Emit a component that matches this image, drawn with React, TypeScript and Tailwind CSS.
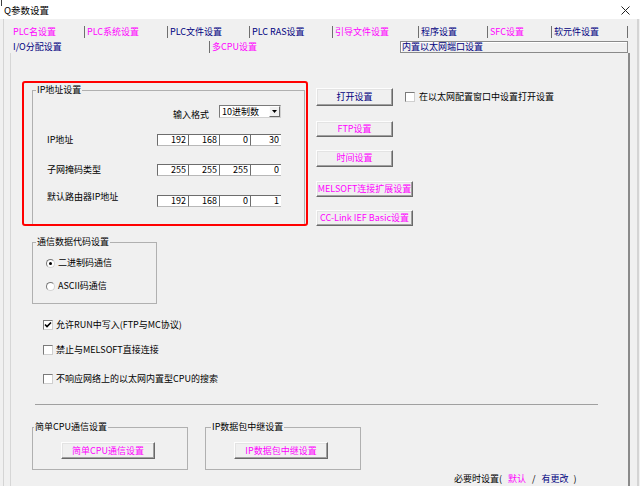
import React from 'react';

const MAG = 'text-[#ff00ff]';
const NAVY = 'text-[#000080]';

type Tab = { label: string; cls: string };

const topTabs: Tab[] = [
  { label: 'PLC名设置', cls: `w-[74px] pl-[3px] ${MAG}` },
  { label: 'PLC系统设置', cls: `w-[83px] pl-[2px] border-l border-[#6f6f6f] ${MAG}` },
  { label: 'PLC文件设置', cls: `w-[82px] pl-[2px] border-l border-[#6f6f6f] ${NAVY}` },
  { label: 'PLC RAS设置', cls: `w-[83px] pl-[2px] border-l border-[#6f6f6f] ${NAVY}` },
  { label: '引导文件设置', cls: `w-[86px] pl-[2px] border-l border-[#6f6f6f] ${MAG}` },
  { label: '程序设置', cls: `w-[69px] pl-[2px] border-l border-[#6f6f6f] ${NAVY}` },
  { label: 'SFC设置', cls: `w-[64px] pl-[2px] border-l border-[#6f6f6f] ${MAG}` },
  { label: '软元件设置', cls: `w-[77px] pl-[2px] border-l border-r border-[#6f6f6f] ${NAVY}` },
];

const Button: React.FC<{ label: string; className: string; color?: string }> = ({ label, className, color = MAG }) => (
  <div
    className={`flex items-center justify-center whitespace-nowrap bg-[#f0f0f0] border border-t-[#fdfdfd] border-l-[#fdfdfd] border-r-[#696969] border-b-[#696969] shadow-[inset_-1px_-1px_0_#a0a0a0,inset_1px_1px_0_#e3e3e3] ${color} ${className}`}
  >
    {label}
  </div>
);

const CheckBox: React.FC<{ checked?: boolean }> = ({ checked }) => (
  <div className="w-[10px] h-[10px] shrink-0 bg-white border border-[#7a7a7a] border-r-[#cfcfcf] border-b-[#cfcfcf] flex items-center justify-center">
    {checked && (
      <svg width="8" height="8" viewBox="0 0 8 8">
        <path d="M1 3.5 L3 5.5 L7 1.5" stroke="#000" strokeWidth="1.6" fill="none" />
      </svg>
    )}
  </div>
);

const Radio: React.FC<{ checked?: boolean }> = ({ checked }) => (
  <div className="w-[9px] h-[9px] shrink-0 rounded-full bg-white border border-[#7a7a7a] border-r-[#d4d4d4] border-b-[#d4d4d4] flex items-center justify-center">
    {checked && <div className="w-[3px] h-[3px] rounded-full bg-black" />}
  </div>
);

const IpField: React.FC<{ values: string[] }> = ({ values }) => (
  <div className="flex w-[124px] h-[12px] shrink-0">
    {values.map((v, i) => (
      <div
        key={i}
        className="w-[31px] h-full bg-white border-t border-l border-[#6d6d6d] border-b border-b-[#b8b8b8] flex items-center justify-end pr-[2px]"
      >
        {v}
      </div>
    ))}
  </div>
);

const Group: React.FC<{ title: string; className: string; legendCls?: string; children: React.ReactNode }> = ({
  title,
  className,
  legendCls = 'ml-[3px]',
  children,
}) => (
  <fieldset className={`border border-[#b0b0b0] p-0 m-0 min-w-0 ${className}`}>
    <legend className={`px-[1px] leading-[12px] ${legendCls}`}>{title}</legend>
    {children}
  </fieldset>
);

export default function App() {
  return (
    <div className="w-[640px] h-[486px] bg-[#f0f0f0] overflow-hidden flex flex-col font-['Noto_Sans_CJK_SC',sans-serif] text-[9px] leading-[12px] text-black">
      {/* title bar */}
      <div className="relative h-[19px] shrink-0 bg-white flex items-center justify-between pl-[4px] pr-[10px]">
        <div className="absolute left-[1px] top-0 w-px h-[6px] bg-[#404040]" />
        <span className="text-[9.5px] mt-[1px]">Q参数设置</span>
        <svg width="9" height="9" viewBox="0 0 9 9" className="mt-[1px]">
          <path d="M0.5 0.5 L8.5 8.5 M8.5 0.5 L0.5 8.5" stroke="#222" strokeWidth="1" />
        </svg>
      </div>

      {/* window body */}
      <div className="flex-1 ml-[3px] mr-[1px] border-l border-r-2 border-[#d4d4d4] pl-[6px] pr-[7px] flex flex-col">
        <div className="flex h-[12px] mt-[7px] shrink-0">
          {topTabs.map((t) => (
            <div key={t.label} className={`h-full whitespace-nowrap ${t.cls}`}>
              {t.label}
            </div>
          ))}
        </div>
        <div className="flex h-[12px] mt-[3px] shrink-0">
          <div className={`w-[199px] h-full pl-[3px] ${NAVY}`}>I/O分配设置</div>
          <div className={`w-[191px] h-full pl-[2px] border-l border-[#6f6f6f] ${MAG}`}>多CPU设置</div>
          <div className={`w-[228px] h-full pl-[1px] border border-[#8a8a8a] shadow-[inset_1px_1px_0_#ffffff] leading-[10px] ${NAVY}`}>
            内置以太网端口设置
          </div>
        </div>

        {/* tab panel */}
        <div className="flex-1 border-l border-[#d6d6d6] border-r-2 border-r-[#8a8a8a] flex flex-col">
          {/* ip + buttons */}
          <div className="flex h-[145px] mt-[28px] ml-[11px] shrink-0">
            <div className="w-[286px] h-full border-2 border-[#ff0000] rounded-[3px] flex flex-col pl-[8px] pr-[1px] pt-[1px]">
              <Group title="IP地址设置" className="flex-1 border-b-0">
                <div className="flex flex-col">
                  <div className="flex items-start h-[13px] mt-[9px] ml-[140px]">
                    <span className="mt-[4px] whitespace-nowrap">输入格式</span>
                    <div className="ml-[10px] w-[62px] h-[13px] bg-white border border-[#7a7a7a] border-r-[#d0d0d0] border-b-[#d0d0d0] flex items-center justify-between pl-[2px]">
                      <span>10进制数</span>
                      <div className="w-[11px] h-[11px] bg-[#f0f0f0] border border-t-[#fdfdfd] border-l-[#fdfdfd] border-r-[#696969] border-b-[#696969] flex items-center justify-center">
                        <svg width="5" height="3" viewBox="0 0 5 3">
                          <path d="M0 0 H5 L2.5 3 Z" fill="#000" />
                        </svg>
                      </div>
                    </div>
                  </div>
                  <div className="flex items-center mt-[16px] pl-[14px]">
                    <span className="w-[110px]">IP地址</span>
                    <IpField values={['192', '168', '0', '30']} />
                  </div>
                  <div className="flex items-center mt-[18px] pl-[14px]">
                    <span className="w-[110px]">子网掩码类型</span>
                    <IpField values={['255', '255', '255', '0']} />
                  </div>
                  <div className="flex items-start mt-[15px] pl-[14px]">
                    <span className="w-[110px]">默认路由器IP地址</span>
                    <div className="mt-[4px]">
                      <IpField values={['192', '168', '0', '1']} />
                    </div>
                  </div>
                </div>
              </Group>
            </div>

            <div className="ml-[8px] flex flex-col items-start">
              <div className="mt-[7px] flex items-center">
                <Button label="打开设置" color={NAVY} className="w-[77px] h-[18px]" />
                <div className="ml-[12px]">
                  <CheckBox />
                </div>
                <span className="ml-[4px] whitespace-nowrap">在以太网配置窗口中设置打开设置</span>
              </div>
              <Button label="FTP设置" className="mt-[15px] w-[77px] h-[18px]" />
              <Button label="时间设置" className="mt-[13px] w-[77px] h-[18px]" />
              <Button label="MELSOFT连接扩展设置" className="mt-[14px] w-[97px] h-[18px]" />
              <Button label="CC-Link IEF Basic设置" className="mt-[13px] w-[97px] h-[18px]" />
            </div>
          </div>

          {/* code setting */}
          <Group title="通信数据代码设置" className="mt-[10px] ml-[21px] w-[125px] shrink-0">
            <div className="pl-[13px] pt-[9px] pb-[11px] flex flex-col gap-[11px]">
              <div className="flex items-center h-[12px]">
                <Radio checked />
                <span className="ml-[3px]">二进制码通信</span>
              </div>
              <div className="flex items-center h-[12px]">
                <Radio />
                <span className="ml-[3px]">ASCII码通信</span>
              </div>
            </div>
          </Group>

          {/* options */}
          <div className="ml-[32px] mt-[15px] flex flex-col shrink-0">
            <div className="flex items-center h-[12px]">
              <CheckBox checked />
              <span className="ml-[3px] whitespace-nowrap">允许RUN中写入(FTP与MC协议)</span>
            </div>
            <div className="flex items-center h-[12px] mt-[13px]">
              <CheckBox />
              <span className="ml-[3px] whitespace-nowrap">禁止与MELSOFT直接连接</span>
            </div>
            <div className="flex items-center h-[12px] mt-[17px]">
              <CheckBox />
              <span className="ml-[3px] whitespace-nowrap">不响应网络上的以太网内置型CPU的搜索</span>
            </div>
          </div>

          <div className="ml-[24px] mt-[19px] w-[563px] h-px bg-[#a0a0a0] shrink-0" />

          {/* bottom groups */}
          <div className="flex ml-[21px] mt-[16px] gap-[17px] shrink-0">
            <Group title="简单CPU通信设置" className="w-[156px]" legendCls="ml-[1px]">
              <div className="pl-[28px] pt-[9px] pb-[10px]">
                <Button label="简单CPU通信设置" className="w-[94px] h-[17px]" />
              </div>
            </Group>
            <Group title="IP数据包中继设置" className="w-[156px]" legendCls="ml-[5px]">
              <div className="pl-[28px] pt-[9px] pb-[10px]">
                <Button label="IP数据包中继设置" className="w-[94px] h-[17px]" />
              </div>
            </Group>
          </div>

          <div className="flex h-[12px] ml-[443px] mt-[3px] whitespace-nowrap shrink-0">
            <span>必要时设置(</span>
            <span className={`ml-[6px] ${MAG}`}>默认</span>
            <span className="ml-[6px]">/</span>
            <span className={`ml-[6px] ${NAVY}`}>有更改</span>
            <span className="ml-[5px]">)</span>
          </div>
        </div>
      </div>
    </div>
  );
}
